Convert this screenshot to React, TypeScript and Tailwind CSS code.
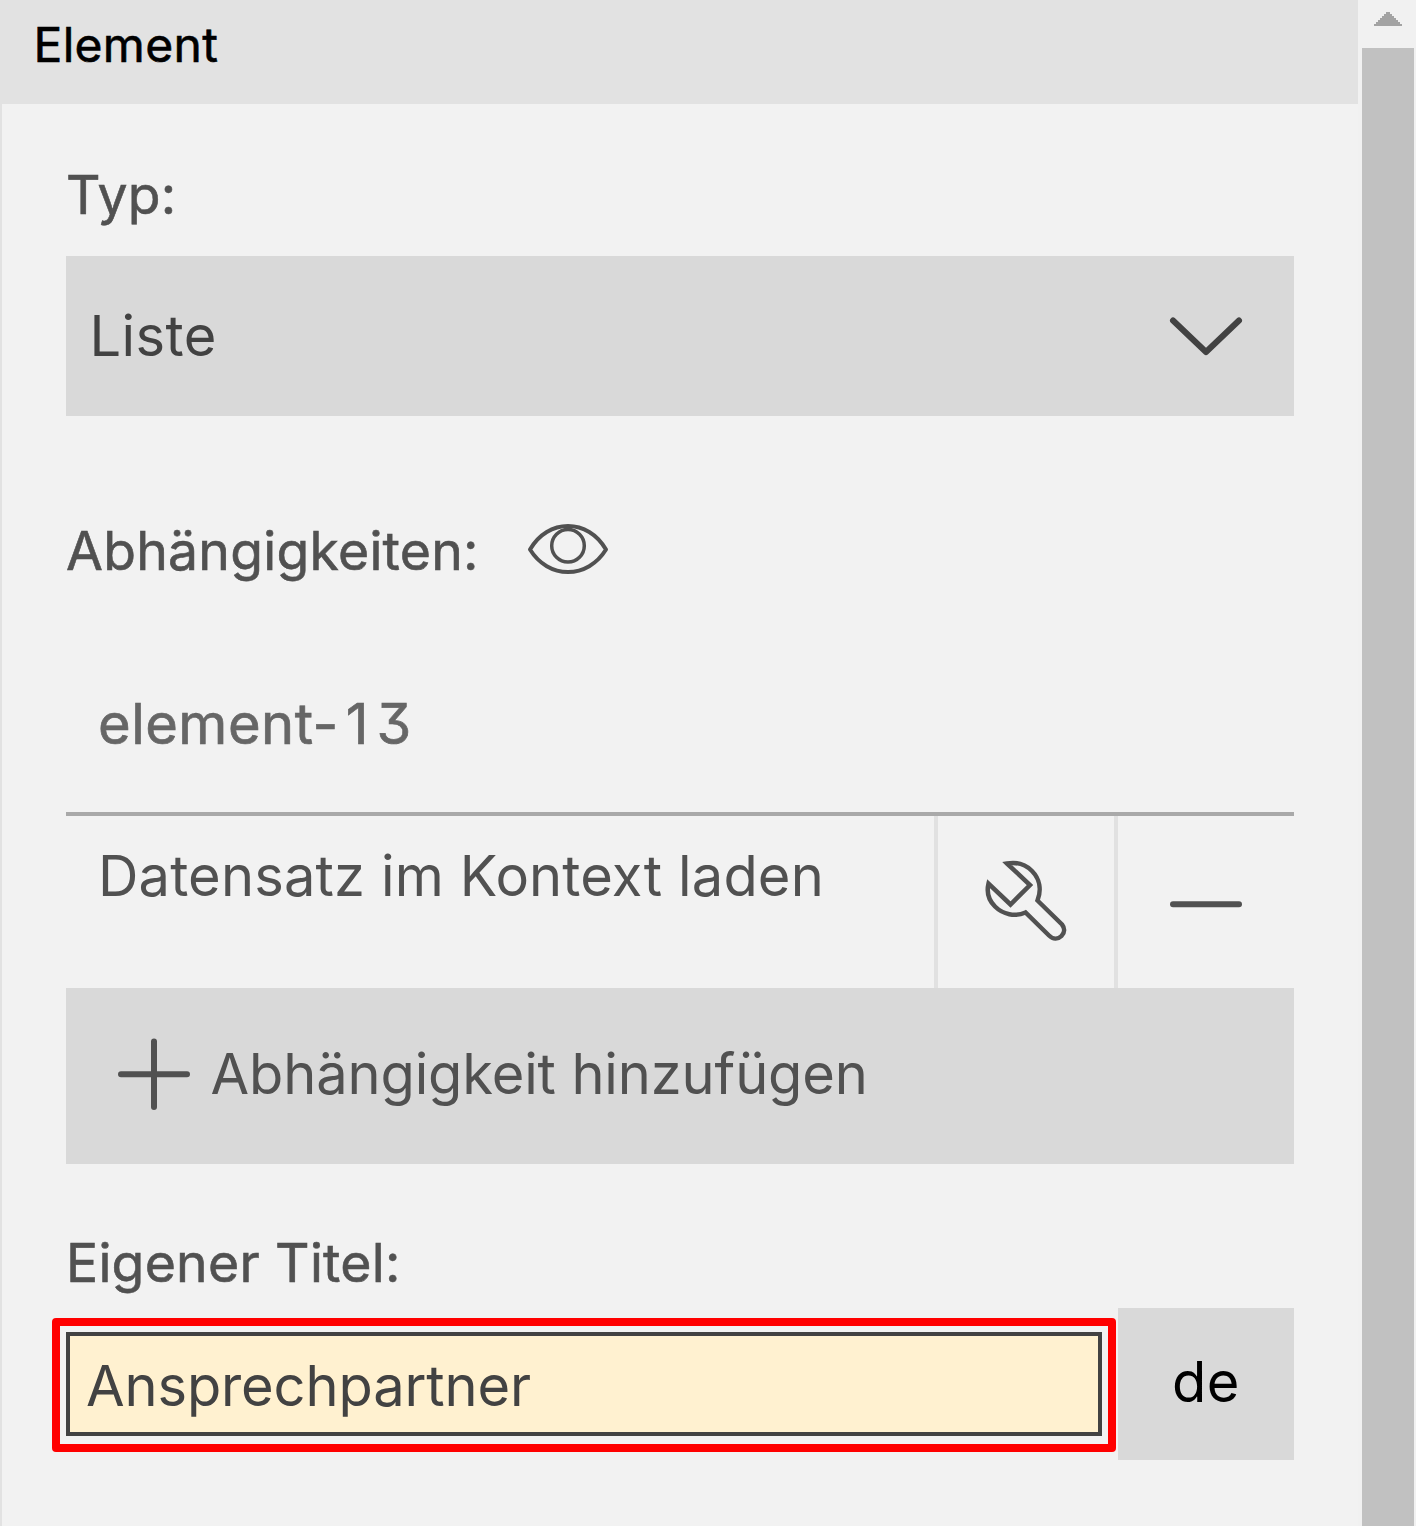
import type { ReactNode } from "react";

function Label({ children, className }: { children: ReactNode; className: string }) {
  return (
    <div className={`h-16 whitespace-nowrap text-[53.5px] leading-[64px] tracking-[0.25px] text-[#515151] [-webkit-text-stroke:0.6px_#515151] ${className}`}>
      {children}
    </div>
  );
}

function ChevronIcon() {
  return (
    <svg width="76" height="44" viewBox="0 0 76 44" fill="none" stroke="#424242" strokeWidth="6" strokeLinecap="round" strokeLinejoin="round">
      <path d="M5 6.5 38 38 71 6.5" />
    </svg>
  );
}

function EyeIcon() {
  return (
    <svg width="84" height="56" viewBox="0 0 84 56" fill="none" stroke="#515151" strokeWidth="4" strokeLinejoin="round">
      <path d="M4 28.500C13 13 27 5 42 5s29 8 38 23.500C71 43 57 51 42 51S13 43 4 28.500Z" />
      <circle cx="42" cy="24.700" r="16.300" strokeWidth="3.500" />
    </svg>
  );
}

function WrenchIcon() {
  return (
    <svg width="84" height="84" viewBox="984 860 84 84" fill="none" stroke="#515151" strokeWidth="4.500">
      <path d="M1007 863.500 1030 885 1010.500 904.500 988.500 883.500C986.500 892 988.500 900 995 906.500 1003 914.500 1015 917 1025.500 912.500L1049 935.500C1053 939.500 1058 939.500 1061.500 936 1065 932.500 1064.800 928 1062 924.500L1037.500 900.500C1041.500 890 1040 879 1032 871 1025.500 864.500 1018 861.500 1007 863.500Z" />
    </svg>
  );
}

function PlusIcon() {
  return (
    <svg width="72" height="72" viewBox="0 0 72 72" fill="none" stroke="#515151" strokeWidth="6" strokeLinecap="round">
      <path d="M3 36.300H69M36 3.500V69" />
    </svg>
  );
}

function MinusIcon() {
  return (
    <svg width="72" height="8" viewBox="0 0 72 8" fill="none" stroke="#515151" strokeWidth="6" strokeLinecap="round">
      <path d="M3 4.300H69" />
    </svg>
  );
}

function Scrollbar() {
  return (
    <div className="flex w-[58px] flex-col bg-[#f1f1f1] pr-0.5 pl-1">
      <div className="flex h-12 justify-center pt-3">
        <svg width="28" height="14" viewBox="0 0 28 14" shapeRendering="crispEdges" fill="#a3a3a3">
          <path d="M12 0h4v2h2v2h2v2h2v2h2v2h2v2h2v2H0v-2h2v-2h2V8h2V6h2V4h2V2h2Z" />
        </svg>
      </div>
      <div className="flex-1 bg-[#c1c1c1]" />
    </div>
  );
}

export default function App() {
  return (
    <div className="flex h-[1526px] w-[1416px] overflow-hidden bg-[#f2f2f2] font-[Inter,sans-serif]">
      <div className="flex w-[1358px] flex-col">
        <header className="h-[104px] bg-[#e2e2e2] pt-[17px] pl-[33.5px] text-[48px] leading-[56px] tracking-[0.3px] text-black [-webkit-text-stroke:0.6px_#000]">
          Element
        </header>
        <main className="flex-1 border-l-2 border-[#e2e2e2] px-16">
          <Label className="mt-[59px]">Typ:</Label>
          <div className="mt-[29px] flex h-40 items-center justify-between bg-[#d9d9d9] pr-[50px] pl-[23.5px] text-[56px] tracking-[0.4px] text-[#424242]">
            <span>Liste</span>
            <ChevronIcon />
          </div>

          <div className="mt-[103px] flex">
            <Label className="w-[412px]">Abhängigkeiten:</Label>
            <div className="pt-0.5 pl-12">
              <EyeIcon />
            </div>
          </div>

          <div className="mt-[101px] h-[132px] border-b-4 border-[#a9a9a9] pl-8 text-[56px] leading-[80px] tracking-[0.5px] text-[#666] [-webkit-text-stroke:0.7px_#666] [font-feature-settings:'cv09']">
            element-<span className="ml-[7px] tracking-[8px]">13</span>
          </div>
          <div className="flex h-[172px]">
            <div className="w-[868px] pt-5 pl-8 text-[56px] leading-[80px] tracking-[0.16px] text-[#515151]">
              Datensatz im Kontext laden
            </div>
            <div className="flex w-[180px] items-center justify-center border-l-4 border-[#e1e1e1]">
              <WrenchIcon />
            </div>
            <div className="flex w-[180px] items-center justify-center border-l-4 border-[#e1e1e1] pt-1">
              <MinusIcon />
            </div>
          </div>
          <div className="flex h-44 items-center bg-[#d9d9d9] pb-1 pl-[52px] text-[56px] tracking-[-0.13px] text-[#515151]">
            <PlusIcon />
            <span className="pl-[20.5px]">Abhängigkeit hinzufügen</span>
          </div>

          <Label className="mt-[67px]">Eigener Titel:</Label>
          <div className="mt-[13px] flex h-[152px] items-center">
            <div className="relative mr-4 flex h-[104px] w-[1036px] items-center border-4 border-[#424242] bg-[#fff1d0] pt-1 pl-4 text-[56px] tracking-[-0.13px] text-[#424242]">
              Ansprechpartner
              <div className="absolute -inset-x-[18px] -top-[18px] -bottom-5 rounded border-8 border-[#ff0000]" />
            </div>
            <div className="flex h-full w-44 items-center justify-center bg-[#d9d9d9] pb-1 text-[56px] tracking-[0.5px] text-black">
              de
            </div>
          </div>
        </main>
      </div>
      <Scrollbar />
    </div>
  );
}
